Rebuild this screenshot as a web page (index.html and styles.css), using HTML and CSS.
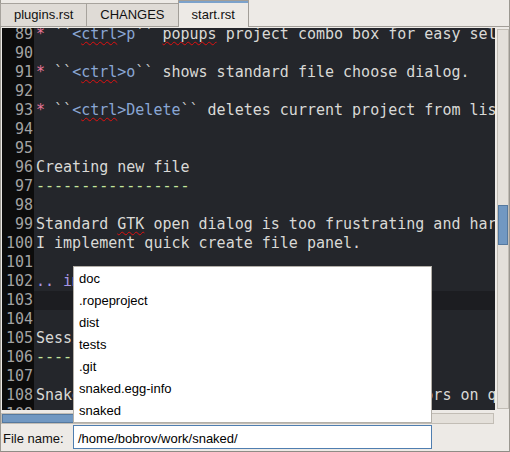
FILE: index.html
```html
<!DOCTYPE html>
<html>
<head>
<meta charset="utf-8">
<link rel="stylesheet" href="styles.css">
</head>
<body>
<div class="window">
  <div class="tabs">
    <div class="tab">plugins.rst</div>
    <div class="tab">CHANGES</div>
    <div class="tab active">start.rst</div>
  </div>
  <div class="content">
    <div class="editor">
      <div class="gutter">
        <div class="lines">
          <div>89</div><div>90</div><div>91</div><div>92</div><div>93</div><div>94</div><div>95</div><div>96</div><div>97</div><div>98</div><div>99</div><div>100</div><div>101</div><div>102</div><div>103</div><div>104</div><div>105</div><div>106</div><div>107</div><div>108</div><div>109</div>
        </div>
      </div>
      <div class="text">
        <div class="lines">
          <div class="ln"><span class="bullet">*</span> <span class="tick">``</span><span class="lit">&lt;<span class="spell">ctrl</span>&gt;p</span><span class="tick">``</span> <span class="spell">popups</span> project combo box for easy selection.</div>
          <div class="ln"> </div>
          <div class="ln"><span class="bullet">*</span> <span class="tick">``</span><span class="lit">&lt;<span class="spell">ctrl</span>&gt;o</span><span class="tick">``</span> shows standard file choose dialog.</div>
          <div class="ln"> </div>
          <div class="ln"><span class="bullet">*</span> <span class="tick">``</span><span class="lit">&lt;<span class="spell">ctrl</span>&gt;Delete</span><span class="tick">``</span> deletes current project from list.</div>
          <div class="ln"> </div>
          <div class="ln"> </div>
          <div class="ln">Creating new file</div>
          <div class="ln rule">-----------------</div>
          <div class="ln"> </div>
          <div class="ln">Standard <span class="spell">GTK</span> open dialog is too frustrating and hard to use, so</div>
          <div class="ln">I implement quick create file panel.</div>
          <div class="ln"> </div>
          <div class="ln directive">.. image:: images/create.png</div>
          <div class="ln current"> </div>
          <div class="ln"> </div>
          <div class="ln">Sessions</div>
          <div class="ln rule">--------</div>
          <div class="ln"> </div>
          <div class="ln">Snaked stores information about opened editors on quit and restores them.</div>
          <div class="ln"> </div>
        </div>
      </div>
    </div>
    <div class="vscroll"><div class="vthumb" style="margin-top:175px;height:40px"></div></div>
  </div>
  <div class="hrow">
    <div class="htrough"><div class="hthumb" style="width:380px"></div></div>
  </div>
  <div class="bottom">
    <div class="label">File name:</div>
    <div class="input">/home/bobrov/work/snaked/</div>
  </div>
  <ul class="popup">
    <li>doc</li>
    <li>.ropeproject</li>
    <li>dist</li>
    <li>tests</li>
    <li>.git</li>
    <li>snaked.egg-info</li>
    <li>snaked</li>
  </ul>
</div>
</body>
</html>
```

FILE: styles.css
```css
* { box-sizing: border-box; }
html, body {
  margin: 0;
  padding: 0;
  width: 510px;
  height: 452px;
  overflow: hidden;
  background: #edeae6;
}
.window {
  position: relative;
  width: 510px;
  height: 452px;
  border-left: 1px solid #9b9891;
  border-right: 1px solid #9b9891;
  border-bottom: 1px solid #8f8c86;
  background: #edeae6;
  font-family: "Liberation Sans", Arial, sans-serif;
  font-size: 13px;
  color: #000;
}
.tabs {
  display: flex;
  align-items: flex-end;
  height: 27px;
  margin: 0 -1px;
  border-bottom: 1px solid #a29e98;
}
.tab {
  height: 23px;
  padding: 0 13px;
  line-height: 22px;
  border: 1px solid #a7a39d;
  border-bottom: none;
  margin-right: -1px;
  background: #dfdbd6;
  color: #111;
  white-space: nowrap;
}
.tab.active {
  height: 27px;
  margin-bottom: -1px;
  padding-top: 3px;
  background: #edeae6;
  border-color: #a29e98;
  box-shadow: inset 0 2px 0 #7ca2cb;
  position: relative;
}
.content {
  display: flex;
  height: 384px;
  padding: 1px 0 1px 1px;
}
.editor {
  display: flex;
  width: 493px;
  height: 382px;
  overflow: hidden;
  background: #24262b;
  font-family: "DejaVu Sans Mono", monospace;
  font-size: 15px;
  line-height: 19px;
}
.lines {
  margin-top: -3px;
}
.gutter {
  width: 32px;
  flex: none;
  background: #0c0c0c;
  color: #a3a3a3;
  text-align: right;
  padding-right: 1px;
  overflow: hidden;
}
.text {
  flex: 1;
  padding-left: 2px;
  color: #d9d9d6;
  overflow: hidden;
}
.ln {
  white-space: pre;
  height: 19px;
}
.text .current {
  background: #1c1d21;
  margin-left: -2px;
}
.bullet { color: #e8769a; }
.tick { color: #c6c6c6; }
.lit { color: #8aa6d4; }
.spell {
  text-decoration: underline wavy #e01010;
  text-decoration-thickness: 1px;
  text-underline-offset: 2px;
  text-decoration-skip-ink: none;
}
.rule { color: #c6e69c; }
.directive { color: #a696e4; }
.vscroll {
  width: 12px;
  margin: 1px 0 1px 2px;
  background: #e4e0da;
  border: 1px solid #c2bdb5;
}
.vthumb {
  width: 10px;
  background: #7198c2;
  border: 1px solid #55799f;
}
.hrow {
  height: 13px;
  padding-top: 2px;
}
.htrough {
  width: 493px;
  height: 11px;
  background: #e4e0da;
  border: 1px solid #c2bdb5;
}
.hthumb {
  height: 9px;
  background: #7198c2;
  border: 1px solid #55799f;
}
.bottom {
  display: flex;
  height: 27px;
  padding: 1px 0 0 2px;
}
.label {
  width: 70px;
  padding-top: 6px;
  line-height: 15px;
  color: #111;
}
.input {
  width: 359px;
  height: 24px;
  padding: 5px 4px 0;
  line-height: 15px;
  background: #fff;
  border: 1px solid #4f7eb0;
  color: #000;
  white-space: nowrap;
}
.popup {
  position: absolute;
  left: 72px;
  top: 266px;
  width: 359px;
  height: 157px;
  margin: 0;
  padding: 0;
  list-style: none;
  background: #fff;
  border: 1px solid #b3afa8;
}
.popup li {
  height: 22px;
  padding: 2px 5px 0;
  line-height: 20px;
  color: #000;
}
```
